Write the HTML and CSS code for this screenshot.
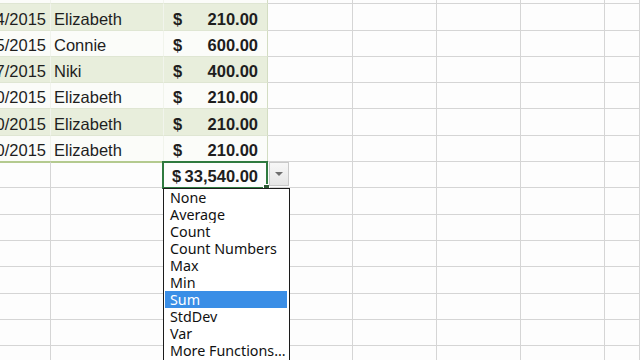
FILE: index.html
```html
<!DOCTYPE html>
<html>
<head>
<meta charset="utf-8">
<link rel="stylesheet" href="styles.css">
</head>
<body>
<div class="sheet">
  <div class="row">
    <div class="c t tw date"></div><div class="c t tw"></div><div class="c t tw tc"></div><div class="c"></div><div class="c"></div><div class="c"></div><div class="c"></div><div class="c"></div>
  </div>
  <div class="row">
    <div class="c t tg date">11/24/2015</div><div class="c t tg name">Elizabeth</div><div class="c t tg tc amt"><span>$</span><span>210.00</span></div><div class="c"></div><div class="c"></div><div class="c"></div><div class="c"></div><div class="c"></div>
  </div>
  <div class="row">
    <div class="c t tw date">11/25/2015</div><div class="c t tw name">Connie</div><div class="c t tw tc amt"><span>$</span><span>600.00</span></div><div class="c"></div><div class="c"></div><div class="c"></div><div class="c"></div><div class="c"></div>
  </div>
  <div class="row">
    <div class="c t tg date">11/27/2015</div><div class="c t tg name">Niki</div><div class="c t tg tc amt"><span>$</span><span>400.00</span></div><div class="c"></div><div class="c"></div><div class="c"></div><div class="c"></div><div class="c"></div>
  </div>
  <div class="row">
    <div class="c t tw date">11/30/2015</div><div class="c t tw name">Elizabeth</div><div class="c t tw tc amt"><span>$</span><span>210.00</span></div><div class="c"></div><div class="c"></div><div class="c"></div><div class="c"></div><div class="c"></div>
  </div>
  <div class="row">
    <div class="c t tg date">11/30/2015</div><div class="c t tg name">Elizabeth</div><div class="c t tg tc amt"><span>$</span><span>210.00</span></div><div class="c"></div><div class="c"></div><div class="c"></div><div class="c"></div><div class="c"></div>
  </div>
  <div class="row">
    <div class="c t tw date">11/30/2015</div><div class="c t tw name">Elizabeth</div><div class="c t tw tc amt"><span>$</span><span>210.00</span></div><div class="c"></div><div class="c"></div><div class="c"></div><div class="c"></div><div class="c"></div>
  </div>
  <div class="row total">
    <div class="c tot"></div><div class="c tot"></div><div class="c tot amt"><span>$</span><span>33,540.00</span></div><div class="c"></div><div class="c"></div><div class="c"></div><div class="c"></div><div class="c"></div>
  </div>
  <div class="row"><div class="c"></div><div class="c"></div><div class="c"></div><div class="c"></div><div class="c"></div><div class="c"></div><div class="c"></div><div class="c"></div></div>
  <div class="row"><div class="c"></div><div class="c"></div><div class="c"></div><div class="c"></div><div class="c"></div><div class="c"></div><div class="c"></div><div class="c"></div></div>
  <div class="row"><div class="c"></div><div class="c"></div><div class="c"></div><div class="c"></div><div class="c"></div><div class="c"></div><div class="c"></div><div class="c"></div></div>
  <div class="row"><div class="c"></div><div class="c"></div><div class="c"></div><div class="c"></div><div class="c"></div><div class="c"></div><div class="c"></div><div class="c"></div></div>
  <div class="row"><div class="c"></div><div class="c"></div><div class="c"></div><div class="c"></div><div class="c"></div><div class="c"></div><div class="c"></div><div class="c"></div></div>
  <div class="row"><div class="c"></div><div class="c"></div><div class="c"></div><div class="c"></div><div class="c"></div><div class="c"></div><div class="c"></div><div class="c"></div></div>
  <div class="row"><div class="c"></div><div class="c"></div><div class="c"></div><div class="c"></div><div class="c"></div><div class="c"></div><div class="c"></div><div class="c"></div></div>
</div>

<div class="selection"><div class="handle"></div></div>
<div class="dd-btn"><div class="tri"></div></div>
<ul class="menu">
  <li>None</li>
  <li>Average</li>
  <li>Count</li>
  <li>Count Numbers</li>
  <li>Max</li>
  <li>Min</li>
  <li class="active">Sum</li>
  <li>StdDev</li>
  <li>Var</li>
  <li>More Functions...</li>
</ul>
</body>
</html>
```

FILE: styles.css
```css
html, body {
  margin: 0;
  padding: 0;
}
body {
  width: 640px;
  height: 360px;
  overflow: hidden;
  background: #fdfdfd;
  position: relative;
  font-family: "Liberation Sans", Arial, sans-serif;
  color: #1e1e1e;
}
.sheet {
  margin-top: -22px;
}
.row {
  display: grid;
  grid-template-columns: 51px 113px 104px 85px 84px 84px 84px 1fr;
  height: 26.3px;
}
.c {
  box-sizing: border-box;
  border-right: 1px solid #d5d5d5;
  border-bottom: 1px solid #d5d5d5;
  font-size: 16.5px;
  line-height: 20px;
  display: flex;
  align-items: flex-end;
  padding-bottom: 1px;
  white-space: nowrap;
  overflow: hidden;
}
.t {
  border-right-color: #f1f4ec;
  border-bottom-color: #dfe6d3;
}
.tg { background: #e8eedc; }
.tw { background: #fbfcf9; }
.tc { border-right-color: #d3ddc2; }
.date {
  justify-content: flex-end;
  padding-right: 4px;
}
.name {
  padding-left: 3px;
}
.amt {
  justify-content: space-between;
  padding-left: 9px;
  padding-right: 9px;
  font-weight: bold;
}
.total .tot {
  border-top: 2px solid #b4ca8f;
  margin-top: -1px;
  background: #fdfdfd;
}
.total .amt {
  padding-left: 8px;
}
.selection {
  position: absolute;
  left: 162px;
  top: 161px;
  width: 106px;
  height: 28px;
  box-sizing: border-box;
  border: 2px solid #2f7a3f;
}
.handle {
  position: absolute;
  right: -4px;
  bottom: -4px;
  width: 5px;
  height: 5px;
  background: #2f5a35;
  border: 1px solid #fff;
}
.dd-btn {
  position: absolute;
  left: 269px;
  top: 162px;
  width: 20px;
  height: 24px;
  box-sizing: border-box;
  border: 1px solid #c9c9c9;
  background: linear-gradient(#f7f7f7, #e6e6e6);
  display: flex;
  align-items: center;
  justify-content: center;
}
.tri {
  width: 0;
  height: 0;
  border-left: 4px solid transparent;
  border-right: 4px solid transparent;
  border-top: 4px solid #6f6f6f;
}
.menu {
  position: absolute;
  left: 163px;
  top: 188px;
  width: 127px;
  height: 180px;
  box-sizing: border-box;
  margin: 0;
  padding: 0 1px;
  list-style: none;
  background: #fff;
  border: 1px solid #1c1c1c;
  font-family: "Noto Sans", "Open Sans", sans-serif;
  font-size: 14.3px;
}
.menu li {
  height: 17px;
  line-height: 17px;
  padding-left: 5px;
  color: #111;
  white-space: nowrap;
  overflow: hidden;
}
.menu li.active {
  background: #3a8ee6;
  color: #fff;
  margin-right: 1px;
}
```
